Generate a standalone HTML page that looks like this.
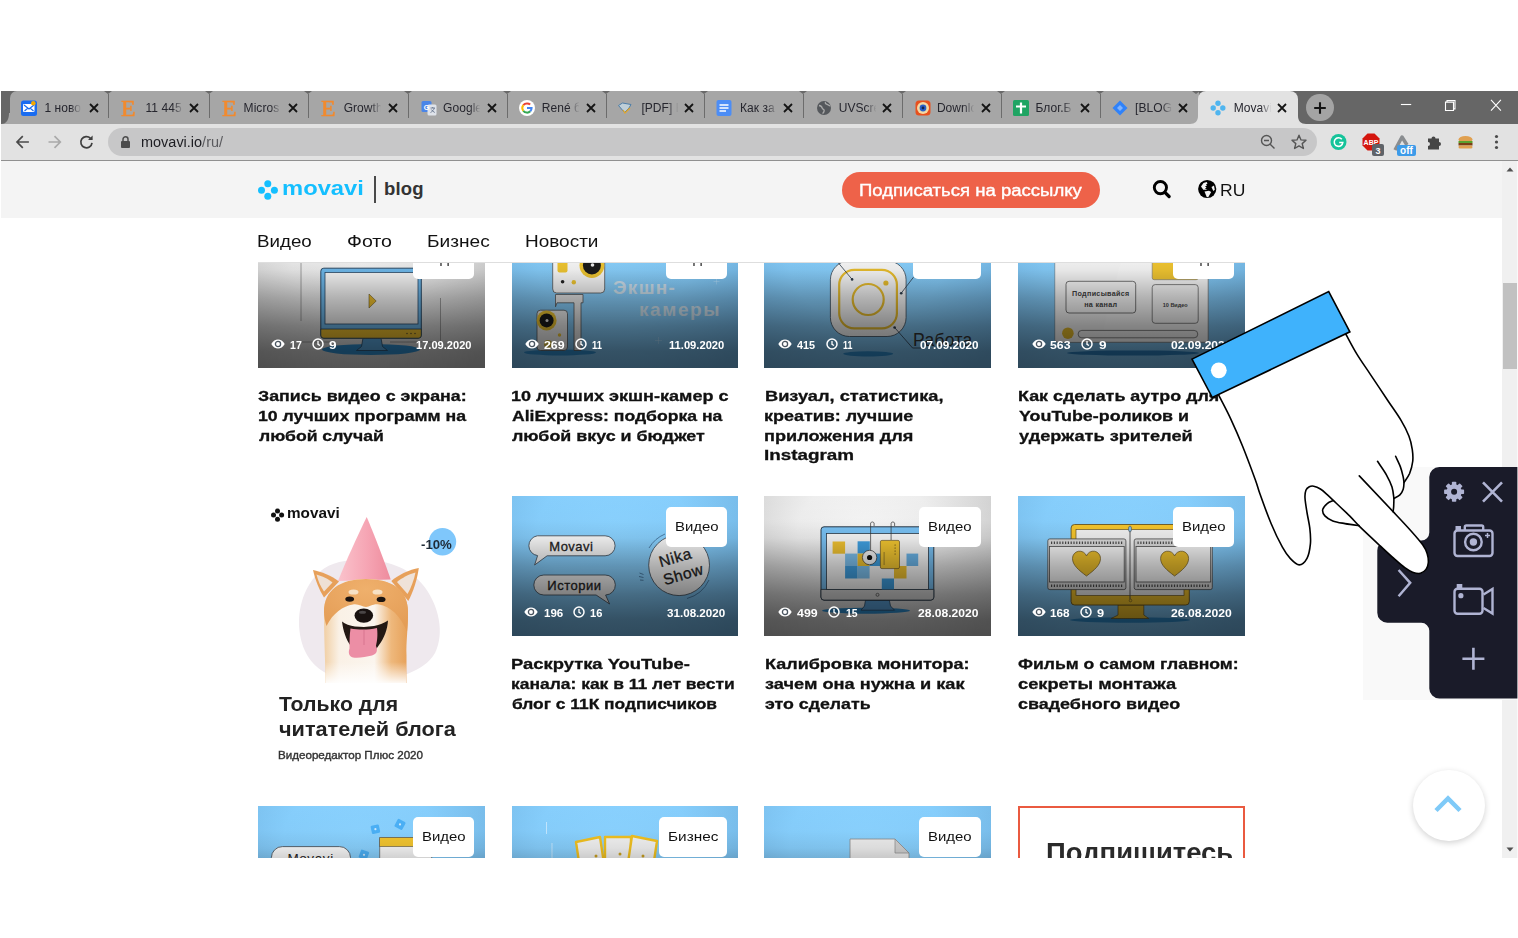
<!DOCTYPE html>
<html lang="ru">
<head>
<meta charset="utf-8">
<title>Movavi blog</title>
<style>
html,body{margin:0;padding:0;background:#fff;}
body{width:1518px;height:938px;position:relative;overflow:hidden;font-family:"Liberation Sans",sans-serif;color:#111;}
*{box-sizing:border-box;}
.abs,#win *{position:absolute;}
#win{position:absolute;left:1px;top:91px;width:1517px;height:767px;overflow:hidden;background:#fff;}
/* ---- browser chrome ---- */
#tabbar{left:0;top:0;width:1517px;height:33px;background:#666;}
#tabgroup{left:8.5px;top:0;width:1189px;height:33px;background:#a6a6a6;border-radius:7px 0 5px 0;}
.fav{top:9px;width:16px;height:16px;}
.favE{font-family:"Liberation Serif",serif;font-size:24px;line-height:24px;color:#f28a2e;font-weight:400;-webkit-text-stroke:0.6px #f28a2e;transform-origin:0 0;white-space:nowrap;}
.tt{top:9px;width:39px;height:16px;font-size:12px;line-height:16px;white-space:nowrap;overflow:hidden;color:#26262e;letter-spacing:0.05px;-webkit-mask-image:linear-gradient(to right,#000 68%,transparent 96%);mask-image:linear-gradient(to right,#000 68%,transparent 96%);}
.tx{top:12.2px;}
.sep{top:3px;width:1px;height:24px;background:#6c6c6c;}
.notch{top:0;width:0;height:0;border-left:4.5px solid transparent;border-right:4.5px solid transparent;border-top:3.2px solid #696969;}
#acttab{left:1197px;top:0;width:100px;height:33px;background:#e2e2e2;border-radius:8px 8px 0 0;}
#toolbar{left:0;top:32.6px;width:1517px;height:37px;background:#e2e2e2;}
#tbline{left:0;top:69px;width:1517px;height:1px;background:#909090;}
#omni{left:107px;top:37px;width:1209px;height:28px;border-radius:14px;background:#c7c7c8;}
.url{font-size:14px;line-height:18px;color:#1d1d22;white-space:nowrap;transform-origin:0 0;}
.url span{position:static;color:#5a5a5e;}
</style>
<style>
#pg{left:-1px;top:-91px;width:1518px;height:938px;}
#hdr{left:1px;top:161px;width:1501px;height:57px;background:#f4f4f4;}
#sb{left:1502px;top:161px;width:16px;height:697px;background:#f0f0f0;}
#sbthumb{left:1503px;top:283px;width:14px;height:86px;background:#c1c1c1;}
.nav{font-size:16.4px;line-height:20px;color:#111;white-space:nowrap;transform-origin:0 0;}
#navline{left:258px;top:262px;width:987px;height:1px;background:#dedede;}
#blog{left:384px;top:178px;font-size:18.5px;line-height:22px;font-weight:700;color:#333;letter-spacing:0.2px;}
#sub{left:842px;top:172px;width:258px;height:36px;border-radius:18px;background:#ee6249;}
.subt{font-size:17.3px;line-height:22px;color:#fff;white-space:nowrap;transform-origin:0 0;-webkit-text-stroke:0.4px #fff;}
.ru{font-size:16.5px;line-height:22px;color:#111;white-space:nowrap;transform-origin:0 0;}
.card{overflow:hidden;}
.card .ov{left:0;top:0;width:100%;height:140px;}
.tag{top:10.8px;height:40px;border-radius:5px;background:#fff;}
.tgt{font-size:13px;line-height:18px;color:#111;white-space:nowrap;transform-origin:0 0;}
.st{font-size:10.6px;line-height:14px;font-weight:700;color:#fff;white-space:nowrap;transform-origin:0 0;}
.tl{font-size:15.2px;line-height:20px;font-weight:700;color:#111;white-space:nowrap;transform-origin:0 0;-webkit-text-stroke:0.3px #111;}
.ttl{width:245px;font-size:17px;line-height:19.7px;font-weight:700;color:#111;white-space:nowrap;letter-spacing:0.1px;}
.adm{font-size:13.8px;line-height:18px;font-weight:700;color:#111;white-space:nowrap;transform-origin:0 0;}
.adp{font-size:12.5px;line-height:18px;font-weight:700;color:#1f2a36;white-space:nowrap;transform-origin:0 0;}
.adh{font-size:20px;line-height:26px;font-weight:700;color:#222;white-space:nowrap;transform-origin:0 0;}
.ads{font-size:11.7px;line-height:16px;color:#333;white-space:nowrap;transform-origin:0 0;-webkit-text-stroke:0.4px #333;}
.mv{font-size:20.5px;line-height:26px;font-weight:700;color:#14bfff;white-space:nowrap;transform-origin:0 0;}
.subh{font-size:27px;line-height:32px;font-weight:700;color:#2a2a2a;white-space:nowrap;transform-origin:0 0;}
</style>
</head>
<body>
<div id="win">
<div id="pg">
<div id="hdr"></div>
<!-- logo -->
<svg style="left:257px;top:179px" width="22" height="22" viewBox="0 0 22 22"><g fill="#14bfff"><circle cx="10.8" cy="4.8" r="3.5"/><circle cx="10.8" cy="17.3" r="3.5"/><circle cx="4.5" cy="11.2" r="3.5"/><circle cx="17.4" cy="11.2" r="3.5"/></g></svg>
<div class="mv" style="left:281.65px;top:175.20px;transform:scaleX(1.1595);">movavi</div>
<div style="left:374px;top:176px;width:2px;height:27px;background:#4a4a4a;"></div>
<div id="blog">blog</div>
<div id="sub"></div>
<div class="subt" style="left:859.02px;top:178.51px;transform:scaleX(1.0728);">Подписаться на рассылку</div>
<svg style="left:1150px;top:176px" width="24" height="24" viewBox="1150 176 24 24"><circle cx="1160.4" cy="187.6" r="6.1" fill="none" stroke="#000" stroke-width="2.9"/><path d="M1164.9 192.3l4.2 4.2" stroke="#000" stroke-width="3.3" stroke-linecap="round"/></svg>
<svg style="left:1197px;top:179px" width="20" height="20" viewBox="1197 179 20 20"><circle cx="1207.2" cy="189" r="9.1" fill="#000"/><path d="M1201 186.5l2.5-3.5 3.2-1 .8 1.5-1.5 1 1 1-2 1 1.5 1-1.5 1.2 2.5 1h-4.2z" fill="#f4f4f4"/><path d="M1204.5 191.6l4.5-.8 2.2 1.3-3 5.2-1.5-.3z" fill="#f4f4f4"/><path d="M1211.5 187l2.5-1.5.8 4.2-1.5 1.2z" fill="#f4f4f4"/></svg>
<div class="ru" style="left:1219.90px;top:179.08px;transform:scaleX(1.0612);">RU</div>
<!-- cards -->
<div class="card" style="left:258px;top:262px;width:227px;height:105.80000000000001px;">
<div style="left:0;top:-34.19999999999999px;width:227px;height:140px;background:radial-gradient(ellipse 75% 95% at 45% 25%,#f6f6f6 0%,#eeeeee 40%,#c2c2c2 100%);">
<svg style="left:0;top:0" width="227" height="140" viewBox="0 0 227 140"><g fill="none" stroke="#8a8a8a" stroke-width="0.8"><path d="M43 20v73M182.5 70v44M43 114h30M132 114h50"/></g>
<ellipse cx="113" cy="121.5" rx="49" ry="5.5" fill="#2f8fd0"/>
<path d="M105 110h18l1.5 8.5 5 4h-31l5-4z" fill="#5aa6dc" stroke="#2b4a66" stroke-width="0.8"/>
<rect x="62.8" y="40.2" width="100.5" height="70" rx="3" fill="#70bbee" stroke="#2b4a66" stroke-width="1"/>
<path d="M62.8 101h100.5v6.2a3 3 0 0 1-3 3h-94.5a3 3 0 0 1-3-3z" fill="#eebf2e" stroke="#2b4a66" stroke-width="0.8"/>
<rect x="67" y="44.5" width="93" height="51.5" fill="#fafafa" stroke="#2b4a66" stroke-width="0.8"/>
<path d="M111 66l7.2 7-7.2 7z" fill="#eebf2e" stroke="#6a5a2a" stroke-width="0.6"/>
<g fill="#6a5a2a"><circle cx="149" cy="105.5" r="0.8"/><circle cx="153" cy="105.5" r="0.8"/><circle cx="157" cy="105.5" r="0.8"/></g>
</svg>
<div class="ov" style="background:linear-gradient(to bottom,rgba(0,0,0,0) 0%,rgba(0,0,0,0.01) 18%,rgba(0,0,0,0.07) 30%,rgba(0,0,0,0.29) 50%,rgba(0,0,0,0.47) 70%,rgba(0,0,0,0.58) 88%,rgba(0,0,0,0.6) 100%);"></div>
<div class="tag" style="left:154.9px;width:61.2px;"></div>
<div class="tgt" style="left:163.81px;top:22.30px;transform:scaleX(1.1484);">Видео</div>
<svg style="left:13.4px;top:111.6px" width="14" height="10" viewBox="0 0 14 10"><path d="M0.3 5C2 1.8 4.5 0.5 7 0.5S12 1.8 13.7 5C12 8.2 9.5 9.5 7 9.5S2 8.2 0.3 5z" fill="#fff"/><circle cx="7" cy="5" r="2.6" fill="none" stroke="#4a5560" stroke-width="1.3"/></svg>
<div class="st" style="left:31.66px;top:110.43px;transform:scaleX(0.9994);">17</div>
<svg style="left:53.6px;top:109.9px" width="12" height="12" viewBox="0 0 12 12"><circle cx="6" cy="6" r="5" fill="none" stroke="#fff" stroke-width="1.5"/><path d="M6 3v3.3l2 1.2" stroke="#fff" stroke-width="1.3" fill="none"/></svg>
<div class="st" style="left:71.42px;top:110.43px;transform:scaleX(1.2838);">9</div>
<div class="st" style="left:157.63px;top:110.43px;transform:scaleX(1.0463);">17.09.2020</div>
</div></div>
<div class="tl" style="left:258.25px;top:386.20px;transform:scaleX(1.1738)">Запись видео с экрана:</div>
<div class="tl" style="left:257.64px;top:405.95px;transform:scaleX(1.1657)">10 лучших программ на</div>
<div class="tl" style="left:258.52px;top:425.70px;transform:scaleX(1.1599)">любой случай</div>
<div class="card" style="left:512px;top:262px;width:226px;height:105.80000000000001px;">
<div style="left:0;top:-34.19999999999999px;width:226px;height:140px;background:radial-gradient(ellipse 75% 95% at 45% 25%,#8ad2ff 0%,#86cefc 45%,#6fb1df 100%);">
<svg style="left:0;top:0" width="227" height="140" viewBox="0 0 227 140"><ellipse cx="48" cy="124.5" rx="36" ry="3" fill="#2f8fd0"/>
<path d="M43.5 66.5h27.5v8.3h-2v47.7h-7v-47.7h-17l-1.5 4z" fill="#eaeaea" stroke="#555" stroke-width="0.8"/>
<rect x="40.7" y="20" width="52" height="45" rx="4" fill="#fbfbfb" stroke="#555" stroke-width="0.8"/>
<rect x="45.5" y="33" width="10" height="11.5" rx="2" fill="#f2c832"/>
<circle cx="79.9" cy="37.5" r="12.4" fill="#f2c832"/><circle cx="79.9" cy="37.5" r="9" fill="#1b1b1b"/><circle cx="80.5" cy="37" r="1.8" fill="#eee"/>
<circle cx="50.6" cy="53.7" r="1.8" fill="#222"/><circle cx="61.8" cy="54.2" r="2.2" fill="#f2c832"/>
<rect x="25" y="82.2" width="30.5" height="40.3" rx="3.5" fill="#f4f4f4" stroke="#555" stroke-width="0.8"/>
<circle cx="34.6" cy="92.4" r="10" fill="#f2c832"/><circle cx="34.6" cy="92.4" r="7" fill="#1b1b1b"/><circle cx="35" cy="92.4" r="1.5" fill="#eee"/>
<circle cx="47.5" cy="107" r="1.7" fill="#f2c832"/><circle cx="36" cy="116" r="4" fill="#e0c040"/>
<text x="101" y="65.5" font-family="Liberation Sans,sans-serif" font-weight="700" font-size="19" fill="#e9edf0" fill-opacity="0.78" letter-spacing="1.3">Экшн-</text>
<text x="127" y="88" font-family="Liberation Sans,sans-serif" font-weight="700" font-size="19" fill="#e9edf0" fill-opacity="0.78" letter-spacing="1.6">камеры</text>
<g stroke="#bfe4ff" stroke-width="0.6" stroke-opacity="0.7"><path d="M204.5 50.5v6M201.5 53.5h6M146.5 109v7M143 112.5h7"/></g>
</svg>
<div class="ov" style="background:linear-gradient(to bottom,rgba(0,0,0,0) 0%,rgba(0,0,0,0.01) 18%,rgba(0,0,0,0.07) 30%,rgba(0,0,0,0.29) 50%,rgba(0,0,0,0.47) 70%,rgba(0,0,0,0.58) 88%,rgba(0,0,0,0.6) 100%);"></div>
<div class="tag" style="left:153.9px;width:61.2px;"></div>
<div class="tgt" style="left:162.81px;top:22.30px;transform:scaleX(1.1484);">Видео</div>
<svg style="left:12.5px;top:111.6px" width="14" height="10" viewBox="0 0 14 10"><path d="M0.3 5C2 1.8 4.5 0.5 7 0.5S12 1.8 13.7 5C12 8.2 9.5 9.5 7 9.5S2 8.2 0.3 5z" fill="#fff"/><circle cx="7" cy="5" r="2.6" fill="none" stroke="#4a5560" stroke-width="1.3"/></svg>
<div class="st" style="left:32.07px;top:110.43px;transform:scaleX(1.1652);">269</div>
<svg style="left:62.9px;top:109.9px" width="12" height="12" viewBox="0 0 12 12"><circle cx="6" cy="6" r="5" fill="none" stroke="#fff" stroke-width="1.5"/><path d="M6 3v3.3l2 1.2" stroke="#fff" stroke-width="1.3" fill="none"/></svg>
<div class="st" style="left:80.44px;top:110.43px;transform:scaleX(0.8850);">11</div>
<div class="st" style="left:157.43px;top:110.43px;transform:scaleX(1.0543);">11.09.2020</div>
</div></div>
<div class="tl" style="left:510.92px;top:386.20px;transform:scaleX(1.1887)">10 лучших экшн-камер с</div>
<div class="tl" style="left:511.56px;top:405.95px;transform:scaleX(1.1592)">AliExpress: подборка на</div>
<div class="tl" style="left:511.82px;top:425.70px;transform:scaleX(1.1763)">любой вкус и бюджет</div>
<div class="card" style="left:764px;top:262px;width:227px;height:105.80000000000001px;">
<div style="left:0;top:-34.19999999999999px;width:227px;height:140px;background:radial-gradient(ellipse 75% 95% at 45% 25%,#8ad2ff 0%,#86cefc 45%,#6fb1df 100%);">
<svg style="left:0;top:0" width="227" height="140" viewBox="0 0 227 140"><ellipse cx="104.2" cy="125.8" rx="25" ry="2.6" fill="#2f8fd0"/>
<rect x="66.4" y="32.8" width="75.7" height="75.7" rx="19" fill="#fafafa" stroke="#4a5a68" stroke-width="0.9"/>
<rect x="75.2" y="41.8" width="57.7" height="58.5" rx="15" fill="none" stroke="#ecc02e" stroke-width="2.2"/>
<circle cx="104.2" cy="71.5" r="15.5" fill="none" stroke="#ecc02e" stroke-width="2.2"/>
<circle cx="121.9" cy="55" r="2.6" fill="#ecc02e"/>
<g fill="none" stroke="#2c3c4c" stroke-width="0.8"><path d="M74.6 35.2l13.5 16.2M149.5 49.2l-12.3 16M130.6 99.5l18 20.5h9"/></g>
<circle cx="88.1" cy="51.4" r="1.3" fill="#2c3c4c"/><circle cx="137.2" cy="65.2" r="1.3" fill="#2c3c4c"/><circle cx="130.6" cy="99.5" r="1.3" fill="#2c3c4c"/>
<text x="149" y="118" font-family="Liberation Sans,sans-serif" font-size="17.5" fill="#333" letter-spacing="0.3">Работа</text>
</svg>
<div class="ov" style="background:linear-gradient(to bottom,rgba(0,0,0,0) 0%,rgba(0,0,0,0.01) 18%,rgba(0,0,0,0.07) 30%,rgba(0,0,0,0.29) 50%,rgba(0,0,0,0.47) 70%,rgba(0,0,0,0.58) 88%,rgba(0,0,0,0.6) 100%);"></div>
<div class="tag" style="left:148.6px;width:68.0px;"></div>
<div class="tgt" style="left:164.62px;top:22.30px;transform:scaleX(1.2238);">Фото</div>
<svg style="left:14px;top:111.6px" width="14" height="10" viewBox="0 0 14 10"><path d="M0.3 5C2 1.8 4.5 0.5 7 0.5S12 1.8 13.7 5C12 8.2 9.5 9.5 7 9.5S2 8.2 0.3 5z" fill="#fff"/><circle cx="7" cy="5" r="2.6" fill="none" stroke="#4a5560" stroke-width="1.3"/></svg>
<div class="st" style="left:33.34px;top:110.43px;transform:scaleX(1.0218);">415</div>
<svg style="left:61.8px;top:109.9px" width="12" height="12" viewBox="0 0 12 12"><circle cx="6" cy="6" r="5" fill="none" stroke="#fff" stroke-width="1.5"/><path d="M6 3v3.3l2 1.2" stroke="#fff" stroke-width="1.3" fill="none"/></svg>
<div class="st" style="left:79.37px;top:110.43px;transform:scaleX(0.8364);">11</div>
<div class="st" style="left:156.03px;top:110.43px;transform:scaleX(1.1053);">07.09.2020</div>
</div></div>
<div class="tl" style="left:764.52px;top:386.20px;transform:scaleX(1.1988)">Визуал, статистика,</div>
<div class="tl" style="left:764.44px;top:405.95px;transform:scaleX(1.1812)">креатив: лучшие</div>
<div class="tl" style="left:764.43px;top:425.70px;transform:scaleX(1.1939)">приложения для</div>
<div class="tl" style="left:764.47px;top:445.45px;transform:scaleX(1.2409)">Instagram</div>
<div class="card" style="left:1018px;top:262px;width:227px;height:105.80000000000001px;">
<div style="left:0;top:-34.19999999999999px;width:227px;height:140px;background:radial-gradient(ellipse 75% 95% at 45% 25%,#8ad2ff 0%,#86cefc 45%,#6fb1df 100%);">
<svg style="left:0;top:0" width="227" height="140" viewBox="0 0 227 140"><ellipse cx="115" cy="125" rx="66" ry="2.6" fill="#2a7fbe"/>
<rect x="37" y="18" width="153.2" height="96.3" rx="3" fill="#fafafa" stroke="#777" stroke-width="0.8"/>
<path d="M37 18h70l-25 96h-45z" fill="#f6f6f6" opacity="0.6"/>
<rect x="134.2" y="22" width="46" height="29.7" rx="2" fill="#f4c832" stroke="#777" stroke-width="0.6"/>
<rect x="48" y="53.3" width="69.7" height="31.7" rx="3" fill="#fbfbfb" stroke="#555" stroke-width="0.8"/>
<text x="82.8" y="68" font-family="Liberation Sans,sans-serif" font-size="7.2" font-weight="700" fill="#444" text-anchor="middle" letter-spacing="0.3">Подписывайся</text>
<text x="82.8" y="78.5" font-family="Liberation Sans,sans-serif" font-size="7.2" font-weight="700" fill="#444" text-anchor="middle" letter-spacing="0.3">на канал</text>
<rect x="134.2" y="56.6" width="46" height="38.7" rx="3" fill="#fafafa" stroke="#555" stroke-width="0.7"/>
<text x="157.2" y="79" font-family="Liberation Sans,sans-serif" font-size="5.5" font-weight="700" fill="#444" text-anchor="middle">10 Видео</text>
<rect x="60.1" y="102.4" width="119.7" height="7.4" rx="3.7" fill="#f4f4f4" stroke="#555" stroke-width="0.7"/>
<circle cx="49.9" cy="105.2" r="5.8" fill="#e6bc2c"/>
</svg>
<div class="ov" style="background:linear-gradient(to bottom,rgba(0,0,0,0) 0%,rgba(0,0,0,0.01) 18%,rgba(0,0,0,0.07) 30%,rgba(0,0,0,0.29) 50%,rgba(0,0,0,0.47) 70%,rgba(0,0,0,0.58) 88%,rgba(0,0,0,0.6) 100%);"></div>
<div class="tag" style="left:154.9px;width:61.2px;"></div>
<div class="tgt" style="left:163.81px;top:22.30px;transform:scaleX(1.1484);">Видео</div>
<svg style="left:13.6px;top:111.6px" width="14" height="10" viewBox="0 0 14 10"><path d="M0.3 5C2 1.8 4.5 0.5 7 0.5S12 1.8 13.7 5C12 8.2 9.5 9.5 7 9.5S2 8.2 0.3 5z" fill="#fff"/><circle cx="7" cy="5" r="2.6" fill="none" stroke="#4a5560" stroke-width="1.3"/></svg>
<div class="st" style="left:32.43px;top:110.43px;transform:scaleX(1.1616);">563</div>
<svg style="left:63.3px;top:109.9px" width="12" height="12" viewBox="0 0 12 12"><circle cx="6" cy="6" r="5" fill="none" stroke="#fff" stroke-width="1.5"/><path d="M6 3v3.3l2 1.2" stroke="#fff" stroke-width="1.3" fill="none"/></svg>
<div class="st" style="left:81.22px;top:110.43px;transform:scaleX(1.2838);">9</div>
<div class="st" style="left:153.22px;top:110.43px;transform:scaleX(1.1417);">02.09.2020</div>
</div></div>
<div class="tl" style="left:1018.34px;top:386.20px;transform:scaleX(1.1784)">Как сделать аутро для</div>
<div class="tl" style="left:1019.14px;top:405.95px;transform:scaleX(1.1769)">YouTube-роликов и</div>
<div class="tl" style="left:1019.32px;top:425.70px;transform:scaleX(1.1990)">удержать зрителей</div>
<div class="card" style="left:512px;top:495.9px;width:226px;height:140px;">
<div style="left:0;top:0px;width:226px;height:140px;background:radial-gradient(ellipse 75% 95% at 45% 25%,#8ad2ff 0%,#86cefc 45%,#6fb1df 100%);">
<svg style="left:0;top:0" width="227" height="140" viewBox="0 0 227 140"><path d="M25.3 39.8h67.8a10 10 0 0 1 0 20h-58l-12.5 9.2 3-9.4a10 10 0 0 1-.3-19.8z" fill="#f8f8f8" stroke="#4a5560" stroke-width="0.9"/>
<text x="59.4" y="55" font-family="Liberation Sans,sans-serif" font-size="13" fill="#222" text-anchor="middle" letter-spacing="0.5" stroke="#222" stroke-width="0.3">Movavi</text>
<path d="M31.8 79h61.3a10 10 0 0 1 .5 20l4 9-13.5-9h-52.3a10 10 0 0 1 0-20z" fill="#f4f4f4" stroke="#4a5560" stroke-width="0.9"/>
<text x="62.4" y="94.3" font-family="Liberation Sans,sans-serif" font-size="13" fill="#222" text-anchor="middle" letter-spacing="0.5" stroke="#222" stroke-width="0.3">Истории</text>
<circle cx="167.1" cy="69.2" r="30.4" fill="#f6f6f6" stroke="#4a5560" stroke-width="0.9"/>
<g fill="none" stroke="#3c6a90" stroke-width="0.8"><path d="M137 52a34 34 0 0 1 16-14M197 84a34 34 0 0 1-22 18.5M204 40l4-1.5M204.5 43l4.5-.5M127.5 77l4 1.5M127 80.5l4.5 1M128 84l3.5 .3"/></g>
<g font-family="Liberation Sans,sans-serif" font-size="15.5" fill="#222" stroke="#222" stroke-width="0.3" text-anchor="middle" transform="rotate(-16 167 69)"><text x="165.5" y="66" letter-spacing="0.6">Nika</text><text x="168.5" y="84.5" letter-spacing="0.6">Show</text></g>
</svg>
<div class="ov" style="background:linear-gradient(to bottom,rgba(0,0,0,0) 0%,rgba(0,0,0,0.01) 18%,rgba(0,0,0,0.07) 30%,rgba(0,0,0,0.29) 50%,rgba(0,0,0,0.47) 70%,rgba(0,0,0,0.58) 88%,rgba(0,0,0,0.6) 100%);"></div>
<div class="tag" style="left:153.9px;width:61.2px;"></div>
<div class="tgt" style="left:162.81px;top:22.30px;transform:scaleX(1.1484);">Видео</div>
<svg style="left:12.2px;top:111.6px" width="14" height="10" viewBox="0 0 14 10"><path d="M0.3 5C2 1.8 4.5 0.5 7 0.5S12 1.8 13.7 5C12 8.2 9.5 9.5 7 9.5S2 8.2 0.3 5z" fill="#fff"/><circle cx="7" cy="5" r="2.6" fill="none" stroke="#4a5560" stroke-width="1.3"/></svg>
<div class="st" style="left:31.51px;top:110.43px;transform:scaleX(1.0876);">196</div>
<svg style="left:60.9px;top:109.9px" width="12" height="12" viewBox="0 0 12 12"><circle cx="6" cy="6" r="5" fill="none" stroke="#fff" stroke-width="1.5"/><path d="M6 3v3.3l2 1.2" stroke="#fff" stroke-width="1.3" fill="none"/></svg>
<div class="st" style="left:78.13px;top:110.43px;transform:scaleX(1.0503);">16</div>
<div class="st" style="left:154.51px;top:110.43px;transform:scaleX(1.0981);">31.08.2020</div>
</div></div>
<div class="tl" style="left:511.20px;top:654.30px;transform:scaleX(1.2111)">Раскрутка YouTube-</div>
<div class="tl" style="left:511.18px;top:674.05px;transform:scaleX(1.1492)">канала: как в 11 лет вести</div>
<div class="tl" style="left:511.62px;top:693.80px;transform:scaleX(1.1444)">блог с 11К подписчиков</div>
<div class="card" style="left:764px;top:495.9px;width:227px;height:140px;">
<div style="left:0;top:0px;width:227px;height:140px;background:radial-gradient(ellipse 75% 95% at 45% 25%,#f6f6f6 0%,#eeeeee 40%,#c2c2c2 100%);">
<svg style="left:0;top:0" width="227" height="140" viewBox="0 0 227 140"><ellipse cx="102" cy="114.7" rx="44" ry="3" fill="#2f8fd0"/>
<path d="M101.5 104h23.8l1.2 6 4 4.2h-33.5l3.5-4.2z" fill="#5a9fd6" stroke="#2b4a66" stroke-width="0.8"/>
<rect x="57" y="30.8" width="112.8" height="73.3" rx="3" fill="#78c0f2" stroke="#2b3a48" stroke-width="1"/>
<path d="M57 93.4h112.8v7.7a3 3 0 0 1-3 3h-106.8a3 3 0 0 1-3-3z" fill="#d8d8d8" stroke="#2b3a48" stroke-width="0.8"/>
<rect x="62.5" y="37.5" width="102" height="56" fill="#f6f6f6" stroke="#2b3a48" stroke-width="0.8"/>
<circle cx="113.5" cy="98.8" r="1.5" fill="none" stroke="#333" stroke-width="0.6"/>
<g transform="translate(-9.4 0)"><rect x="78" y="45.5" width="12.5" height="12.2" fill="#f0c230"/><rect x="103" y="45.3" width="12.2" height="12.3" fill="#3f9fe0"/><rect x="90.5" y="57.6" width="12.5" height="12.4" fill="#7cc0ee"/><rect x="103" y="57.6" width="12" height="12.4" fill="#f0c230"/><rect x="115" y="57.6" width="11" height="12.4" fill="#3f9fe0"/><rect x="90.5" y="70" width="12.5" height="12.5" fill="#3f9fe0"/><rect x="103" y="70" width="12" height="12.5" fill="#7cc0ee"/><rect x="151.9" y="57.6" width="11.7" height="12.4" fill="#6ab4e8"/><rect x="139.4" y="70" width="12.5" height="12.5" fill="#f0c230"/><rect x="127.2" y="82.5" width="12.2" height="10.9" fill="#3f9fe0"/>
<g fill="none" stroke="#333" stroke-width="0.7"><path d="M116 60V27a2 2 0 0 1 3.5 0v3M136.5 44V27a2 2 0 0 1 3.5 0v3"/></g>
<rect x="125.8" y="44.4" width="19.1" height="28.2" rx="1.5" fill="#f2c530" stroke="#6a5520" stroke-width="0.7"/>
<path d="M129.5 56v13" stroke="#6a5520" stroke-width="0.6"/><g fill="#4a3a10"><circle cx="140.5" cy="49" r="0.6"/><circle cx="140.5" cy="52" r="0.6"/><circle cx="140.5" cy="55" r="0.6"/><circle cx="140.5" cy="58" r="0.6"/></g>
<circle cx="115" cy="61.5" r="7.2" fill="#f4f4f4" stroke="#333" stroke-width="0.7"/><circle cx="115" cy="61.5" r="2.6" fill="#111"/></g>
</svg>
<div class="ov" style="background:linear-gradient(to bottom,rgba(0,0,0,0) 0%,rgba(0,0,0,0.01) 18%,rgba(0,0,0,0.07) 30%,rgba(0,0,0,0.29) 50%,rgba(0,0,0,0.47) 70%,rgba(0,0,0,0.58) 88%,rgba(0,0,0,0.6) 100%);"></div>
<div class="tag" style="left:155.4px;width:61.2px;"></div>
<div class="tgt" style="left:164.31px;top:22.30px;transform:scaleX(1.1484);">Видео</div>
<svg style="left:14px;top:111.6px" width="14" height="10" viewBox="0 0 14 10"><path d="M0.3 5C2 1.8 4.5 0.5 7 0.5S12 1.8 13.7 5C12 8.2 9.5 9.5 7 9.5S2 8.2 0.3 5z" fill="#fff"/><circle cx="7" cy="5" r="2.6" fill="none" stroke="#4a5560" stroke-width="1.3"/></svg>
<div class="st" style="left:33.41px;top:110.43px;transform:scaleX(1.1683);">499</div>
<svg style="left:64.4px;top:109.9px" width="12" height="12" viewBox="0 0 12 12"><circle cx="6" cy="6" r="5" fill="none" stroke="#fff" stroke-width="1.5"/><path d="M6 3v3.3l2 1.2" stroke="#fff" stroke-width="1.3" fill="none"/></svg>
<div class="st" style="left:82.47px;top:110.43px;transform:scaleX(0.9848);">15</div>
<div class="st" style="left:153.98px;top:110.43px;transform:scaleX(1.1405);">28.08.2020</div>
</div></div>
<div class="tl" style="left:764.53px;top:654.30px;transform:scaleX(1.1854)">Калибровка монитора:</div>
<div class="tl" style="left:765.24px;top:674.05px;transform:scaleX(1.1974)">зачем она нужна и как</div>
<div class="tl" style="left:765.26px;top:693.80px;transform:scaleX(1.1693)">это сделать</div>
<div class="card" style="left:1018px;top:495.9px;width:227px;height:140px;">
<div style="left:0;top:0px;width:227px;height:140px;background:radial-gradient(ellipse 75% 95% at 45% 25%,#8ad2ff 0%,#86cefc 45%,#6fb1df 100%);">
<svg style="left:0;top:0" width="227" height="140" viewBox="0 0 227 140"><ellipse cx="112" cy="124" rx="60" ry="2.8" fill="#2f8fd0"/>
<path d="M100 109h25.8v10l5 3.5h-37.6l6.8-3.5z" fill="#f2c22a" stroke="#6a5520" stroke-width="0.7"/>
<rect x="53.1" y="28.5" width="118.2" height="80.5" rx="3.5" fill="#f4c42c" stroke="#6a5520" stroke-width="0.9"/>
<rect x="58" y="33.5" width="108" height="66" fill="#f0f0f0" stroke="#6a5520" stroke-width="0.7"/>
<circle cx="112.5" cy="104.5" r="1.3" fill="none" stroke="#6a5520" stroke-width="0.6"/>
<g stroke="#4a4a4a" stroke-width="0.8"><rect x="29.8" y="42.9" width="78.1" height="50.7" rx="2" fill="#dadada"/><rect x="116.2" y="42.9" width="78.1" height="50.7" rx="2" fill="#dadada"/><rect x="31.5" y="50.5" width="74.7" height="35.5" fill="#f6f6f6"/><rect x="118" y="50.5" width="74.7" height="35.5" fill="#f6f6f6"/></g>
<g stroke="#4a4a4a" stroke-width="2.6" stroke-dasharray="1.2 1.6" fill="none"><path d="M33 46.7h72M33 89.8h72M119.5 46.7h72M119.5 89.8h72"/></g>
<path d="M112 31v72" stroke="#4a4a4a" stroke-width="0.9"/><ellipse cx="112" cy="33" rx="1.5" ry="3" fill="#8ac4ea" stroke="#4a4a4a" stroke-width="0.6"/>
<g fill="#eec02c" stroke="#6a5520" stroke-width="0.7"><path d="M68.5 80c-8-6-14-11-14-17.5a7.2 7.2 0 0 1 14-2.5 7.2 7.2 0 0 1 14 2.5c0 6.5-6 11.5-14 17.5z"/><path d="M156.6 80c-8-6-14-11-14-17.5a7.2 7.2 0 0 1 14-2.5 7.2 7.2 0 0 1 14 2.5c0 6.5-6 11.5-14 17.5z"/></g>
</svg>
<div class="ov" style="background:linear-gradient(to bottom,rgba(0,0,0,0) 0%,rgba(0,0,0,0.01) 18%,rgba(0,0,0,0.07) 30%,rgba(0,0,0,0.29) 50%,rgba(0,0,0,0.47) 70%,rgba(0,0,0,0.58) 88%,rgba(0,0,0,0.6) 100%);"></div>
<div class="tag" style="left:154.9px;width:61.2px;"></div>
<div class="tgt" style="left:163.81px;top:22.30px;transform:scaleX(1.1484);">Видео</div>
<svg style="left:13.6px;top:111.6px" width="14" height="10" viewBox="0 0 14 10"><path d="M0.3 5C2 1.8 4.5 0.5 7 0.5S12 1.8 13.7 5C12 8.2 9.5 9.5 7 9.5S2 8.2 0.3 5z" fill="#fff"/><circle cx="7" cy="5" r="2.6" fill="none" stroke="#4a5560" stroke-width="1.3"/></svg>
<div class="st" style="left:32.10px;top:110.43px;transform:scaleX(1.1081);">168</div>
<svg style="left:61.9px;top:109.9px" width="12" height="12" viewBox="0 0 12 12"><circle cx="6" cy="6" r="5" fill="none" stroke="#fff" stroke-width="1.5"/><path d="M6 3v3.3l2 1.2" stroke="#fff" stroke-width="1.3" fill="none"/></svg>
<div class="st" style="left:79.25px;top:110.43px;transform:scaleX(1.2060);">9</div>
<div class="st" style="left:152.97px;top:110.43px;transform:scaleX(1.1462);">26.08.2020</div>
</div></div>
<div class="tl" style="left:1018.38px;top:654.30px;transform:scaleX(1.1565)">Фильм о самом главном:</div>
<div class="tl" style="left:1018.27px;top:674.05px;transform:scaleX(1.2028)">секреты монтажа</div>
<div class="tl" style="left:1018.28px;top:693.80px;transform:scaleX(1.1808)">свадебного видео</div>
<div class="card" style="left:258px;top:806px;width:227px;height:52px;">
<div style="left:0;top:0px;width:227px;height:140px;background:radial-gradient(ellipse 75% 95% at 45% 25%,#8ad2ff 0%,#86cefc 45%,#6fb1df 100%);">
<svg style="left:0;top:0" width="227" height="140" viewBox="0 0 227 140"><rect x="13.4" y="40.6" width="79.1" height="22" rx="11" fill="#f8f8f8" stroke="#4a5560" stroke-width="0.9"/>
<text x="52.6" y="56.7" font-family="Liberation Sans,sans-serif" font-size="13.5" fill="#222" text-anchor="middle" letter-spacing="0.6">Movavi</text>
<rect x="121.7" y="31.5" width="52" height="40" rx="1.5" fill="#f6f6f6" stroke="#555" stroke-width="0.7"/>
<rect x="121.7" y="31.5" width="52" height="9.2" fill="#f2c530" stroke="#555" stroke-width="0.6"/>
<g fill="#4bb0f6"><rect x="113.2" y="19" width="8.4" height="8.4" rx="1.2" transform="rotate(-12 117.4 23.2)"/><rect x="137.6" y="14" width="8.8" height="8.8" rx="1.2" transform="rotate(28 142 18.4)"/><rect x="101.6" y="44.5" width="8.6" height="8.6" rx="1.2" transform="rotate(20 106 48.8)"/></g>
<g fill="#cfeaff"><circle cx="117.4" cy="23.2" r="1.1"/><circle cx="142" cy="18.4" r="1.1"/><circle cx="106" cy="48.8" r="1.1"/></g>
</svg>
<div class="ov" style="background:linear-gradient(to bottom,rgba(0,0,0,0) 0%,rgba(0,0,0,0.01) 18%,rgba(0,0,0,0.07) 30%,rgba(0,0,0,0.29) 50%,rgba(0,0,0,0.47) 70%,rgba(0,0,0,0.58) 88%,rgba(0,0,0,0.6) 100%);"></div>
<div class="tag" style="left:154.9px;width:61.2px;"></div>
<div class="tgt" style="left:163.81px;top:22.30px;transform:scaleX(1.1484);">Видео</div>
</div></div>
<div class="card" style="left:512px;top:806px;width:226px;height:52px;">
<div style="left:0;top:0px;width:226px;height:140px;background:radial-gradient(ellipse 75% 95% at 45% 25%,#8ad2ff 0%,#86cefc 45%,#6fb1df 100%);">
<svg style="left:0;top:0" width="227" height="140" viewBox="0 0 227 140"><g stroke="#d9efff" stroke-width="0.9" stroke-opacity="0.8"><path d="M34.5 16v12M40 37v15"/></g>
<g fill="#f0f0f0" stroke="#f0c020" stroke-width="2.4" stroke-linejoin="round"><path d="M64 36l24-5 6 40-24 5z"/><path d="M93 31h26v42h-26z"/><path d="M120 30l25 5-6 40-25-5z"/></g>
<g fill="#c9a020"><circle cx="84" cy="50" r="1.5"/><circle cx="108" cy="48" r="1.5"/><circle cx="131" cy="50" r="1.5"/></g>
</svg>
<div class="ov" style="background:linear-gradient(to bottom,rgba(0,0,0,0) 0%,rgba(0,0,0,0.01) 18%,rgba(0,0,0,0.07) 30%,rgba(0,0,0,0.29) 50%,rgba(0,0,0,0.47) 70%,rgba(0,0,0,0.58) 88%,rgba(0,0,0,0.6) 100%);"></div>
<div class="tag" style="left:147.1px;width:68.0px;"></div>
<div class="tgt" style="left:155.92px;top:22.30px;transform:scaleX(1.1799);">Бизнес</div>
</div></div>
<div class="card" style="left:764px;top:806px;width:227px;height:52px;">
<div style="left:0;top:0px;width:227px;height:140px;background:radial-gradient(ellipse 75% 95% at 45% 25%,#8ad2ff 0%,#86cefc 45%,#6fb1df 100%);">
<svg style="left:0;top:0" width="227" height="140" viewBox="0 0 227 140"><path d="M204 20.5v3M202.5 22h3" stroke="#c8e8ff" stroke-width="0.6"/>
<path d="M86 33h45l14 14v30h-59z" fill="#ececec" stroke="#8a8a8a" stroke-width="0.8"/>
<path d="M131 33v14h14z" fill="#cfcfcf" stroke="#8a8a8a" stroke-width="0.7"/>
</svg>
<div class="ov" style="background:linear-gradient(to bottom,rgba(0,0,0,0) 0%,rgba(0,0,0,0.01) 18%,rgba(0,0,0,0.07) 30%,rgba(0,0,0,0.29) 50%,rgba(0,0,0,0.47) 70%,rgba(0,0,0,0.58) 88%,rgba(0,0,0,0.6) 100%);"></div>
<div class="tag" style="left:155.4px;width:61.2px;"></div>
<div class="tgt" style="left:164.31px;top:22.30px;transform:scaleX(1.1484);">Видео</div>
</div></div>
<!-- sticky nav -->
<div style="left:1px;top:218px;width:1501px;height:44.5px;background:#fff;"></div>
<div class="nav" style="left:257.30px;top:231.22px;transform:scaleX(1.1433);">Видео</div>
<div class="nav" style="left:347.22px;top:231.22px;transform:scaleX(1.1946);">Фото</div>
<div class="nav" style="left:426.97px;top:231.22px;transform:scaleX(1.1657);">Бизнес</div>
<div class="nav" style="left:525.28px;top:231.22px;transform:scaleX(1.1573);">Новости</div>
<div id="navline"></div>
<!-- ad -->
<svg style="left:258px;top:496px" width="227" height="200" viewBox="258 496 227 200">
<defs><linearGradient id="dhat" x1="0" y1="0" x2="1" y2="0"><stop offset="0" stop-color="#fac3cc"/><stop offset="0.55" stop-color="#f6a5b4"/><stop offset="1" stop-color="#ee8c9d"/></linearGradient>
<linearGradient id="dfade" x1="0" y1="0" x2="0" y2="1"><stop offset="0" stop-color="#fff" stop-opacity="0"/><stop offset="1" stop-color="#fff" stop-opacity="0.95"/></linearGradient>
<linearGradient id="dbody" x1="0" y1="0" x2="1" y2="0"><stop offset="0" stop-color="#f1cfa4"/><stop offset="0.18" stop-color="#faf1e6"/><stop offset="0.6" stop-color="#fbf5ee"/><stop offset="0.8" stop-color="#eeb87c"/><stop offset="1" stop-color="#e6a058"/></linearGradient>
<radialGradient id="dhead" cx="0.5" cy="0.2" r="0.8"><stop offset="0" stop-color="#efb06c"/><stop offset="1" stop-color="#e49d56"/></radialGradient></defs>
<g fill="#111"><circle cx="277.5" cy="511.1" r="2.5"/><circle cx="277.5" cy="519.2" r="2.5"/><circle cx="273.5" cy="515.1" r="2.5"/><circle cx="281.6" cy="515.1" r="2.5"/></g>
<path d="M345 561c30-4 60 2 78 24 16 20 22 48 12 68-10 18-38 27-68 28-28 1-52-8-62-30-9-20-8-46 4-66 8-14 20-22 36-24z" fill="#efe9ee"/>
<path d="M366.7 517.1c6 14 17 42 24 62.4l-52.7 1.5c8-20 20-46 28.7-63.9z" fill="url(#dhat)"/>
<path d="M313 570c8 1.5 19 6 26 11.5l-15 16c-5-8-9-18-11-27.5z" fill="#e7a05a"/><path d="M316.5 574.5c5.5 1.5 12 4.5 16 8l-8.5 9c-3.5-5-6-11-7.5-17z" fill="#eee0d4"/>
<path d="M418.8 568c-9 1.5-21 7-27.5 13l17 20c5-9 9-22 10.5-33z" fill="#e7a05a"/><path d="M415.5 572.5c-6 1.5-14 5.5-18.5 9.5l10.5 12c3.5-6 6.5-14 8-21.5z" fill="#efe2d8"/>
<path d="M324 612C324 590 340 579 366 579C392 579 408 590 408 612C408 630 406 642 406.5 655L406.5 683L325.5 683C325.5 665 324 640 324 612z" fill="url(#dbody)"/>
<path d="M324 612C324 590 340 579 366 579C392 579 408 590 408 612C408 620 407.5 626 407 632C401 616 390 606 379 604.5C373 603.5 370 607 366 607C362 607 358.5 603.5 353 604.5C343 606 333 613 326.5 626C325 621 324 617 324 612z" fill="url(#dhead)"/>
<ellipse cx="353.5" cy="592" rx="5" ry="2.6" fill="#f8ead6" opacity="0.85"/><ellipse cx="377.5" cy="592" rx="5" ry="2.6" fill="#f8ead6" opacity="0.85"/>
<ellipse cx="349.7" cy="599.1" rx="4.4" ry="2.6" fill="#1c1410"/><ellipse cx="381.1" cy="599.4" rx="4.4" ry="2.6" fill="#1c1410"/>
<path d="M342 621.5c3 2.5 8 4.5 13 5l9 .5 10-1c6-1 10-3 14-5.5-.5 9-4 18-9 24.5-4 6-8 9.5-14 11-6-.5-10-4-14-9.5-5-7-8-16-9-25z" fill="#231813"/>
<path d="M350.5 628.5c8 1.5 18 1.5 26.5-.5 1 8 0 13-1 18 2 4 1 8-4 9.5-6 1.5-14 3-19 2-4-1-5-5-3.5-9 0-7 0-13 1-20z" fill="#ec8ea5"/>
<path d="M364 630v15" stroke="#d46f8b" stroke-width="0.8"/>
<ellipse cx="363.8" cy="615.6" rx="9.3" ry="7.2" fill="#191210"/><ellipse cx="362.5" cy="612.3" rx="3.5" ry="1.5" fill="#4a4646"/>
<rect x="325.6" y="662" width="80.8" height="21.5" fill="url(#dfade)"/>
<circle cx="442.5" cy="541.8" r="13.7" fill="#7fc7fb"/>
</svg>
<div class="adm" style="left:286.71px;top:504.72px;transform:scaleX(1.1083);">movavi</div>
<div class="adp" style="left:421.17px;top:536.07px;transform:scaleX(1.0573);">-10%</div>
<div class="adh" style="left:278.59px;top:690.87px;transform:scaleX(1.0605);">Только для</div>
<div class="adh" style="left:278.73px;top:716.47px;transform:scaleX(1.0837);">читателей блога</div>
<div class="ads" style="left:278.07px;top:746.85px;transform:scaleX(0.9932);">Видеоредактор Плюс 2020</div>

<!-- subscribe box -->
<div style="left:1018px;top:806px;width:227px;height:60px;border:2px solid #ea5a40;border-bottom:0;"></div>
<div style="left:1040px;top:830px;height:28px;width:205px;overflow:hidden;"><div class="subh" style="left:6.42px;top:7.04px;transform:scaleX(1.0165);">Подпишитесь</div></div>
<!-- scrollbar -->
<div id="sb"></div>
<div id="sbthumb"></div>
<svg style="left:1502px;top:161px" width="16" height="17" viewBox="0 0 16 17"><path d="M4.5 10.5l3.5-4 3.5 4z" fill="#505050"/></svg>
<svg style="left:1502px;top:841px" width="16" height="17" viewBox="0 0 16 17"><path d="M4.5 6.5l3.5 4 3.5-4z" fill="#505050"/></svg>
<!-- to top -->
<div style="left:1413px;top:769.5px;width:71.5px;height:71.5px;border-radius:36px;background:#fff;box-shadow:0 2px 6px rgba(0,0,0,0.18);"></div>
<svg style="left:1432px;top:792px" width="32" height="24" viewBox="0 0 32 24"><path d="M4 18.5L16 6.5l12 12" fill="none" stroke="#7fcaf8" stroke-width="4.5"/></svg>
<!-- widget -->
<div style="left:1363px;top:467px;width:155px;height:232.5px;background:#f9f9f9;"></div>
<svg style="left:1370px;top:460px" width="148" height="245" viewBox="1370 460 148 245">
<path d="M1518 467H1439.3a10 10 0 0 0-10 10V532.5a8 8 0 0 1-8 8H1387.3a10 10 0 0 0-10 10V612.8a10 10 0 0 0 10 10H1421.3a8 8 0 0 1 8 8V688.4a10 10 0 0 0 10 10H1518z" fill="#1a1b29"/>
<g fill="none" stroke="#b0b4d3" stroke-width="2.4">
<path d="M1483 482.3l19 19.4M1502 482.3l-19 19.4" stroke-width="2.6"/>
<rect x="1454.5" y="530.5" width="38" height="25.5" rx="3"/>
<path d="M1464.8 530.5v-3.5a1.5 1.5 0 0 1 1.5-1.5h15.4a1.5 1.5 0 0 1 1.5 1.5v3.5"/>
<circle cx="1473.4" cy="542" r="8.3"/>
<path d="M1398.6 570l11.6 12.8-11.6 13.5" stroke-width="2.5"/>
<rect x="1454.5" y="588.7" width="28" height="25" rx="3"/>
<path d="M1483.5 594.5l9-5.5v24.5l-9-5.5"/>
<path d="M1473.4 647.8v22M1462.4 658.8h22" stroke-width="2.6"/>
</g>
<g fill="#b0b4d3"><circle cx="1473.4" cy="542" r="3.7"/><rect x="1455.5" y="526" width="5.5" height="4"/><path d="M1487.5 533v5M1485 535.5h5" stroke="#b0b4d3" stroke-width="1.5"/><rect x="1456.7" y="584" width="5.6" height="4.5"/><circle cx="1460.9" cy="595.7" r="2.6"/>
<g transform="translate(1454.1 491.8)"><circle r="7.6"/><g><rect x="-2.2" y="-10" width="4.4" height="20" rx="0.8"/><rect x="-2.2" y="-10" width="4.4" height="20" rx="0.8" transform="rotate(45)"/><rect x="-2.2" y="-10" width="4.4" height="20" rx="0.8" transform="rotate(90)"/><rect x="-2.2" y="-10" width="4.4" height="20" rx="0.8" transform="rotate(135)"/></g><circle r="3" fill="#1a1b29"/></g></g>
</svg>

<!-- hand -->
<div style="left:1517px;top:91px;width:1px;height:767px;background:rgba(255,255,255,0.6);"></div>
<svg style="left:1185px;top:285px" width="250" height="295" viewBox="1185 285 250 295">
<path d="M1214.5 386.0C1215.3 387.6 1216.4 390.4 1219.1 395.9C1221.8 401.4 1226.8 410.5 1230.7 418.9C1234.6 427.3 1238.5 436.0 1242.6 446.2C1246.7 456.4 1252.5 472.0 1255.4 480.0C1258.3 488.0 1257.4 486.8 1260.0 494.1C1262.6 501.4 1267.5 514.9 1271.2 523.7C1274.9 532.6 1279.2 541.4 1282.4 547.2C1285.6 553.0 1287.4 555.5 1290.2 558.4C1293.0 561.3 1296.4 564.9 1299.2 564.9C1302.0 564.9 1305.1 561.9 1307.0 558.4C1308.9 554.9 1309.9 548.9 1310.4 543.9C1310.9 538.9 1310.4 533.4 1309.8 528.2C1309.2 523.0 1307.8 517.5 1307.0 512.5C1306.2 507.5 1305.2 501.7 1305.0 498.0C1304.8 494.3 1305.2 492.1 1305.9 490.2C1306.6 488.3 1308.0 487.5 1309.3 486.8C1310.6 486.1 1311.8 485.8 1313.7 486.2C1315.6 486.6 1318.2 487.6 1320.4 489.0C1322.7 490.4 1325.1 492.7 1327.2 494.6C1329.3 496.5 1329.6 496.8 1333.3 500.4C1337.0 503.9 1345.1 511.5 1349.6 515.9C1354.0 520.3 1354.9 521.9 1360.0 526.9C1365.1 531.9 1374.6 540.7 1380.2 545.9C1385.8 551.1 1389.5 554.6 1393.6 558.2C1397.7 561.8 1401.6 565.4 1404.8 567.7C1408.0 570.0 1410.0 571.3 1412.6 572.2C1415.2 573.1 1418.2 573.8 1420.4 573.3C1422.6 572.8 1424.7 571.2 1426.0 569.4C1427.3 567.6 1428.1 565.3 1428.3 562.7C1428.5 560.1 1428.1 556.7 1427.2 553.7C1426.3 550.7 1425.5 548.7 1422.7 544.8C1419.9 540.9 1415.3 535.7 1410.4 530.2C1405.5 524.7 1396.0 514.7 1393.1 511.6C1393.2 510.7 1393.6 508.3 1393.7 506.1C1393.8 503.9 1393.9 499.7 1393.9 498.4C1394.9 497.8 1398.4 496.4 1399.9 494.9C1401.5 493.4 1402.5 491.4 1403.2 489.3C1403.9 487.2 1403.9 483.7 1404.0 482.6C1404.9 481.1 1408.1 477.0 1409.6 473.5C1411.0 470.0 1412.2 465.5 1412.7 461.5C1413.2 457.5 1412.9 453.9 1412.3 449.6C1411.7 445.4 1410.8 440.8 1408.9 436.0C1407.1 431.2 1404.8 426.6 1401.2 420.6C1397.7 414.6 1392.7 407.9 1387.6 400.2C1382.5 392.5 1375.6 382.3 1370.5 374.6C1365.4 366.9 1360.9 360.7 1356.9 354.1C1352.9 347.5 1348.9 339.7 1346.3 335.0C1343.7 330.3 1342.3 327.5 1341.5 326.0z" fill="#fff" stroke="#000" stroke-width="1.6" stroke-linejoin="round"/>
<g fill="none" stroke="#000" stroke-width="1.6" stroke-linecap="round"><path d="M1359.3 475.9L1393.1 511.6"/><path d="M1377.5 461.3C1379.0 463.6 1384.0 470.5 1386.4 474.8C1388.8 479.1 1390.8 483.2 1392.0 487.1C1393.2 491.0 1393.6 496.5 1393.9 498.4"/><path d="M1395.6 456.3C1396.4 458.1 1399.1 463.4 1400.4 466.9C1401.7 470.3 1402.6 474.4 1403.2 477.0C1403.8 479.6 1403.9 481.7 1404.0 482.6"/><path d="M1333.3 500.6C1332.3 501.1 1329.0 502.1 1327.2 503.6C1325.4 505.1 1323.1 507.6 1322.7 509.7C1322.3 511.8 1323.2 514.0 1324.9 515.9C1326.6 517.8 1329.5 519.6 1332.8 520.9C1336.1 522.2 1340.6 522.8 1345.0 523.6C1349.4 524.4 1356.7 525.3 1359.0 525.6"/></g>
<path d="M1192 359.1L1328.7 291.6L1349.9 331.8L1212.3 397.5z" fill="#3fb2fc" stroke="#000" stroke-width="1.6" stroke-linejoin="miter"/>
<circle cx="1218.8" cy="370.3" r="7.9" fill="#fff"/>
</svg>


</div>
<div id="tabbar"></div>
<div id="tabgroup"></div>
<svg style="left:0;top:22px" width="12" height="11" viewBox="0 0 12 11"><path d="M0 11h12V0h-4c0 6-2 11-8 11z" fill="#a6a6a6"/></svg>
<div id="acttab"></div>
<svg style="left:1189px;top:25px" width="8" height="8" viewBox="0 0 8 8"><path d="M8 0v8H0c5 0 8-3 8-8z" fill="#e1e1e1"/></svg>
<svg style="left:1297px;top:25px" width="8" height="8" viewBox="0 0 8 8"><path d="M0 0v8h8c-5 0-8-3-8-8z" fill="#e1e1e1"/></svg>
<svg class="fav" style="left:20.1px" viewBox="0 0 16 16"><rect x="0" y="0.5" width="16" height="15.5" rx="2.5" fill="#1a6cf0"/><rect x="2" y="4" width="11.5" height="8" rx="1" fill="#fff"/><path d="M3 5l5 4 5-4M3.5 11l3.5-3M12.5 11L9 8" stroke="#1a6cf0" stroke-width="1.2" fill="none"/><circle cx="12.3" cy="3.2" r="2.3" fill="#f5a800"/></svg><span class="tt" style="left:43.4px">1 ново</span><svg class="tx" style="left:87.9px" width="10" height="10" viewBox="0 0 10 10"><path d="M1 1l8 8M9 1l-8 8" stroke="#141414" stroke-width="1.8" fill="none"/></svg>
<div class="favE" style="left:120.19px;top:4.80px;transform:scaleX(0.9906);">E</div><span class="tt" style="left:144.5px">11 445</span><svg class="tx" style="left:187.9px" width="10" height="10" viewBox="0 0 10 10"><path d="M1 1l8 8M9 1l-8 8" stroke="#141414" stroke-width="1.8" fill="none"/></svg>
<i class="sep" style="left:107.0px"></i><i class="notch" style="left:103.0px"></i>
<div class="favE" style="left:220.89px;top:4.80px;transform:scaleX(0.9906);">E</div><span class="tt" style="left:242.6px">Micros</span><svg class="tx" style="left:287.1px" width="10" height="10" viewBox="0 0 10 10"><path d="M1 1l8 8M9 1l-8 8" stroke="#141414" stroke-width="1.8" fill="none"/></svg>
<i class="sep" style="left:207.8px"></i><i class="notch" style="left:203.8px"></i>
<div class="favE" style="left:320.29px;top:4.80px;transform:scaleX(0.9906);">E</div><span class="tt" style="left:342.7px">Growth</span><svg class="tx" style="left:387.2px" width="10" height="10" viewBox="0 0 10 10"><path d="M1 1l8 8M9 1l-8 8" stroke="#141414" stroke-width="1.8" fill="none"/></svg>
<i class="sep" style="left:307.0px"></i><i class="notch" style="left:303.0px"></i>
<svg class="fav" style="left:420.0px" viewBox="0 0 16 16"><rect x="0.5" y="1" width="10" height="11" rx="1.5" fill="#4a85e8"/><rect x="6.5" y="4.5" width="9" height="11" rx="1.5" fill="#dfe3ea"/><text x="5.5" y="9.5" font-family="Liberation Sans,sans-serif" font-size="7" font-weight="700" fill="#fff" text-anchor="middle">G</text><path d="M9.5 8h4.5M11.7 7v1M13.3 8c-.5 2-2 3.5-3.8 4.5M10.3 9.5c.8 1.200 2 2.3 3.5 3" stroke="#5a6b85" stroke-width="0.8" fill="none"/></svg><span class="tt" style="left:442.1px">Google</span><svg class="tx" style="left:486.1px" width="10" height="10" viewBox="0 0 10 10"><path d="M1 1l8 8M9 1l-8 8" stroke="#141414" stroke-width="1.8" fill="none"/></svg>
<i class="sep" style="left:406.9px"></i><i class="notch" style="left:402.9px"></i>
<svg class="fav" style="left:518.1px" viewBox="0 0 16 16"><circle cx="8" cy="8" r="8" fill="#fff"/><path d="M8 3.4a4.6 4.6 0 0 1 3.2 1.2" stroke="#ea4335" stroke-width="2" fill="none"/><path d="M4.3 5.2A4.6 4.6 0 0 1 8 3.4" stroke="#ea4335" stroke-width="2" fill="none"/><path d="M4.3 10.8A4.6 4.6 0 0 1 4.3 5.2" stroke="#fbbc05" stroke-width="2" fill="none"/><path d="M11.3 11.2A4.6 4.6 0 0 1 4.3 10.8" stroke="#34a853" stroke-width="2" fill="none"/><path d="M8 8h4.6a4.6 4.6 0 0 1-1.3 3.2" stroke="#4285f4" stroke-width="2" fill="none"/></svg><span class="tt" style="left:540.8px">René б</span><svg class="tx" style="left:585.0px" width="10" height="10" viewBox="0 0 10 10"><path d="M1 1l8 8M9 1l-8 8" stroke="#141414" stroke-width="1.8" fill="none"/></svg>
<i class="sep" style="left:506.0px"></i><i class="notch" style="left:502.0px"></i>
<svg class="fav" style="left:616.4px" viewBox="0 0 16 16"><path d="M1.5 5.5l4-2.5 8.5 1.5-2 3.5-4.5 4.5z" fill="#bfcfd8" stroke="#4d7ea8" stroke-width="1"/><path d="M6 10l2 3 5-5" stroke="#e2a62b" stroke-width="1.3" fill="none"/></svg><span class="tt" style="left:640.4px">[PDF] Е</span><svg class="tx" style="left:683.0px" width="10" height="10" viewBox="0 0 10 10"><path d="M1 1l8 8M9 1l-8 8" stroke="#141414" stroke-width="1.8" fill="none"/></svg>
<i class="sep" style="left:604.9px"></i><i class="notch" style="left:600.9px"></i>
<svg class="fav" style="left:715.2px" viewBox="0 0 16 16"><rect x="0.5" y="0" width="15" height="16" rx="2" fill="#4c8df6"/><path d="M3.5 5h9M3.5 8h9M3.5 11h6.5" stroke="#fff" stroke-width="1.5"/></svg><span class="tt" style="left:739.0px">Как за</span><svg class="tx" style="left:782.4px" width="10" height="10" viewBox="0 0 10 10"><path d="M1 1l8 8M9 1l-8 8" stroke="#141414" stroke-width="1.8" fill="none"/></svg>
<i class="sep" style="left:703.1px"></i><i class="notch" style="left:699.1px"></i>
<svg class="fav" style="left:815.1px" viewBox="0 0 16 16"><circle cx="8" cy="8" r="7" fill="#55585c"/><path d="M3 5.5c2 .2 3 1.2 3.2 2.6.2 1.2 1.8.8 2 2.4.1.9-.6 2-1.6 3.2" stroke="#a9a9a9" stroke-width="1.3" fill="none"/><path d="M9.5 2c-.6 1.3.3 2 1.5 2.3 1.3.3 1.6 1.4 3.3 1.6" stroke="#a9a9a9" stroke-width="1.3" fill="none"/></svg><span class="tt" style="left:837.7px">UVScre</span><svg class="tx" style="left:880.9px" width="10" height="10" viewBox="0 0 10 10"><path d="M1 1l8 8M9 1l-8 8" stroke="#141414" stroke-width="1.8" fill="none"/></svg>
<i class="sep" style="left:802.0px"></i><i class="notch" style="left:798.0px"></i>
<svg class="fav" style="left:913.8px" viewBox="0 0 16 16"><rect x="0.5" y="0.5" width="15" height="15" rx="3.5" fill="#e8501d"/><circle cx="8" cy="8" r="6" fill="#f3d9a5"/><circle cx="8" cy="8" r="3.4" fill="#2a5fc7"/><circle cx="8" cy="8" r="1.4" fill="#16244d"/></svg><span class="tt" style="left:935.9px">Downlo</span><svg class="tx" style="left:980.3px" width="10" height="10" viewBox="0 0 10 10"><path d="M1 1l8 8M9 1l-8 8" stroke="#141414" stroke-width="1.8" fill="none"/></svg>
<i class="sep" style="left:900.8px"></i><i class="notch" style="left:896.8px"></i>
<svg class="fav" style="left:1012.1px" viewBox="0 0 16 16"><rect x="0" y="0" width="16" height="16" rx="1.5" fill="#1fa463"/><path d="M8 2.5v11M3 6.5h10" stroke="#fff" stroke-width="2.2"/></svg><span class="tt" style="left:1034.5px">Блог.Б</span><svg class="tx" style="left:1078.7px" width="10" height="10" viewBox="0 0 10 10"><path d="M1 1l8 8M9 1l-8 8" stroke="#141414" stroke-width="1.8" fill="none"/></svg>
<i class="sep" style="left:999.9px"></i><i class="notch" style="left:995.9px"></i>
<svg class="fav" style="left:1110.9px" viewBox="0 0 16 16"><path d="M8 0.5l7.5 7.5-7.5 7.5-7.5-7.5z" fill="#2f82fa"/><path d="M8 5l3 3-3 3-3-3z" fill="#7fb3ff"/></svg><span class="tt" style="left:1134.1px">[BLOG</span><svg class="tx" style="left:1177.0px" width="10" height="10" viewBox="0 0 10 10"><path d="M1 1l8 8M9 1l-8 8" stroke="#141414" stroke-width="1.8" fill="none"/></svg>
<i class="sep" style="left:1099.1px"></i><i class="notch" style="left:1095.1px"></i>
<svg class="fav" style="left:1208.7px" viewBox="0 0 16 16"><g fill="#4fb5ef"><circle cx="8" cy="3.2" r="2.7"/><circle cx="8" cy="12.8" r="2.7"/><circle cx="3.2" cy="8" r="2.7"/><circle cx="12.8" cy="8" r="2.7"/></g></svg><span class="tt" style="left:1232.8px">Movavi</span><svg class="tx" style="left:1276.3px" width="10" height="10" viewBox="0 0 10 10"><path d="M1 1l8 8M9 1l-8 8" stroke="#141414" stroke-width="1.8" fill="none"/></svg>
<i class="notch" style="left:1191.1px"></i>
<div style="left:1305.2px;top:2.6px;width:27.6px;height:27.6px;border-radius:14px;background:#a4a4a4;"></div>
<svg style="left:1311px;top:8.5px" width="16" height="16" viewBox="0 0 16 16"><path d="M8 2.2v11.6M2.2 8h11.6" stroke="#141414" stroke-width="2.1" fill="none"/></svg>
<svg style="left:1395px;top:5px" width="115" height="20" viewBox="1396 96 115 20"><g stroke="#fff" stroke-width="1.1" fill="none"><path d="M1400.9 104.5h10.3"/><path d="M1445.5 102.100h8v8.400h-8z"/><path d="M1447 102v-1.5h8v8.400h-1.5"/><path d="M1491 99.9l9.9 10.800M1500.9 99.9l-9.9 10.800"/></g></svg>
<div id="toolbar"></div>
<div id="tbline"></div>
<svg style="left:14px;top:42px" width="84" height="18" viewBox="0 0 84 18"><g fill="none" stroke-width="1.7"><path d="M13.9 9H2.3M7.8 3.2L2 9l5.8 5.8" stroke="#4a4a4a"/><path d="M33.5 9H45M39.5 3.2L45.3 9l-5.8 5.8" stroke="#a9a9a9"/><path d="M75.5 5.3A5.6 5.6 0 1 0 77 9.8" stroke="#3f3f3f"/><path d="M77.6 2.5v4.6h-4.6z" fill="#3f3f3f" stroke="none"/></g></svg>
<div id="omni"></div>
<svg style="left:119px;top:44px" width="11" height="14" viewBox="0 0 11 14"><rect x="1" y="6" width="9" height="7" rx="1" fill="#4d4d4d"/><path d="M3 6V4.2a2.5 2.5 0 0 1 5 0V6" stroke="#4d4d4d" stroke-width="1.5" fill="none"/></svg>
<div class="url" style="left:139.86px;top:42.15px;transform:scaleX(1.0335);">movavi.io<span>/ru/</span></div>
<svg style="left:1258px;top:42px" width="52" height="18" viewBox="0 0 52 18"><g fill="none" stroke="#555" stroke-width="1.4"><circle cx="7.5" cy="7.5" r="5"/><path d="M11.2 11.2l4.3 4.3M5 7.5h5"/><path d="M40 2.2l2 4.7 5 .4-3.8 3.3 1.2 4.9L40 12.9l-4.4 2.6 1.2-4.9L33 7.3l5-.4z" stroke-linejoin="round"/></g></svg>
<svg style="left:1326px;top:39px" width="186" height="28" viewBox="0 0 186 28"><circle cx="11.5" cy="12" r="8" fill="#15c39a"/><path d="M14.8 9.3a4.3 4.3 0 1 0 1 3.2h-3.6" stroke="#fff" stroke-width="1.6" fill="none"/><path d="M40.5 3.5h7l5 5v7l-5 5h-7l-5-5v-7z" fill="#d4160e"/><text x="44" y="14.5" font-family="Liberation Sans,sans-serif" font-size="7" font-weight="700" fill="#fff" text-anchor="middle">ABP</text><rect x="45" y="14" width="12" height="12" rx="2" fill="#5f6368"/><text x="51" y="23.5" font-family="Liberation Sans,sans-serif" font-size="9" font-weight="700" fill="#fff" text-anchor="middle">3</text><path d="M68 20l7-13 5 8" stroke="#8a8d90" stroke-width="3.5" fill="none" stroke-linejoin="round"/><rect x="70" y="15" width="19" height="11" rx="2" fill="#3d9be9"/><text x="79.5" y="24" font-family="Liberation Sans,sans-serif" font-size="10" font-weight="700" fill="#fff" text-anchor="middle">off</text><path d="M101 8.5h3.5a2 2 0 1 1 4 0H112v3.5a2 2 0 1 1 0 4V19.5h-11V16a2 2 0 1 0 0-4z" fill="#464646"/><ellipse cx="138.5" cy="9.5" rx="7" ry="3.5" fill="#e0a050"/><rect x="131.5" y="11" width="14" height="2" fill="#5aa12e"/><rect x="131.5" y="13" width="14" height="2.5" fill="#7a3f16"/><rect x="131.5" y="15.5" width="14" height="3" rx="1.5" fill="#e0a050"/><g fill="#4a4a4a"><circle cx="169.5" cy="6.5" r="1.6"/><circle cx="169.5" cy="12" r="1.6"/><circle cx="169.5" cy="17.5" r="1.6"/></g></svg>
</div>
</body>
</html>
